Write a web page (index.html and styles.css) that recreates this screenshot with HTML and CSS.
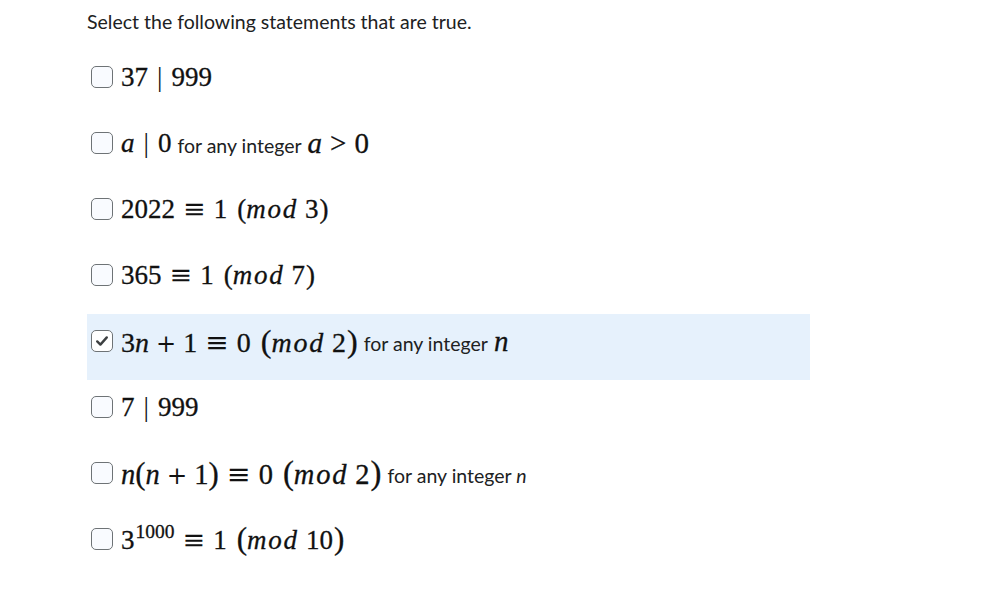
FILE: index.html
```html
<!DOCTYPE html>
<html>
<head>
<meta charset="utf-8">
<link rel="stylesheet" href="styles.css">
</head>
<body>
<div class="page">
  <p class="prompt">Select the following statements that are true.</p>
  <ul class="options">
    <li class="opt"><span class="box"></span><span class="m">37<span class="rel bar">|</span>999</span></li>
    <li class="opt"><span class="box"></span><span class="m"><i>a</i><span class="rel bar">|</span>0</span><span class="t">for any integer</span><span class="m lg"><i>a</i><span class="rel">&gt;</span>0</span></li>
    <li class="opt"><span class="box"></span><span class="m">2022<span class="rel eq">≡</span>1<span class="p">(</span><i class="mod">mod</i>3<span class="p">)</span></span></li>
    <li class="opt"><span class="box"></span><span class="m">365<span class="rel eq">≡</span>1<span class="p">(</span><i class="mod">mod</i>7<span class="p">)</span></span></li>
    <li class="opt sel"><span class="box on"><svg viewBox="0 0 20 20" width="16" height="16"><path d="M4 10.5 L8 14.5 L16 5.5" fill="none" stroke="#3c3f41" stroke-width="3" stroke-linecap="round" stroke-linejoin="round"/></svg></span><span class="m md">3<i>n</i><span class="bin">+</span>1<span class="rel eq">≡</span>0<span class="p big">(</span><i class="mod">mod</i>2<span class="p big">)</span></span><span class="t">for any integer</span><span class="m lg"><i>n</i></span></li>
    <li class="opt"><span class="box"></span><span class="m">7<span class="rel bar">|</span>999</span></li>
    <li class="opt"><span class="box"></span><span class="m xl"><i>n</i><span class="pn">(</span><i>n</i><span class="bin">+</span>1<span class="pn">)</span><span class="rel eq">≡</span>0<span class="p big">(</span><i class="mod">mod</i>2<span class="p big">)</span></span><span class="t">for any integer <em>n</em></span></li>
    <li class="opt"><span class="box"></span><span class="m">3<sup>1000</sup><span class="rel eq">≡</span>1<span class="p big">(</span><i class="mod">mod</i>10<span class="p big">)</span></span></li>
  </ul>
</div>
</body>
</html>
```
FILE: styles.css
```css
html, body { margin: 0; padding: 0; background: #fff; }
body { font-family: Lato, "Noto Sans", sans-serif; color: #202122; }
.page { padding: 0 0 0 87px; width: 723px; }
.prompt { margin: 0; padding-top: 10px; height: 40px; font-size: 19.5px; }
.options { list-style: none; margin: 0; padding: 0; }
.opt { height: 66px; display: flex; align-items: flex-start; padding-top: 15px; box-sizing: border-box; padding-left: 4px; }
.opt.sel { background: #e6f1fc; }
.box { width: 20px; height: 20px; border: 1px solid #6e7376; border-radius: 5px; background: #f9fbff; flex: none; margin-top: 1px; margin-right: 8px; display: flex; align-items: center; justify-content: center; }
.box.on { background: #fff; }
.m { font-family: "Liberation Serif", "DejaVu Serif", serif; font-size: 27px; line-height: 24px; white-space: pre; color: #111; -webkit-text-stroke: 0.3px #111; }
.m.lg { font-size: 29px; }
.m.md { font-size: 28px; }
.m.xl { font-size: 28.5px; }
.m i { font-style: italic; }
.mod { letter-spacing: 1.8px; margin-right: 7px; }
.rel { margin: 0 8px; }
.bar { margin: 0 9px; font-weight: 300; -webkit-text-stroke: 0; }
.bin { margin: 0 7px; font-family: "DejaVu Serif", serif; font-size: 0.86em; -webkit-text-stroke: 0; }
.eq { font-family: "DejaVu Serif", serif; font-size: 1em; -webkit-text-stroke: 0; margin: 0 8px; }
.p { font-size: 1em; margin-left: 10px; }
.p.big { font-size: 1.15em; }
.pn { font-size: 1.08em; }
.m .p:last-child { margin-left: 1px; }
.m sup { font-size: 19.5px; vertical-align: 11px; line-height: 0; margin-left: 1px; }
.t { font-size: 19.5px; line-height: 24px; margin: 3px 6px 0 6px; color: #202122; }
```
